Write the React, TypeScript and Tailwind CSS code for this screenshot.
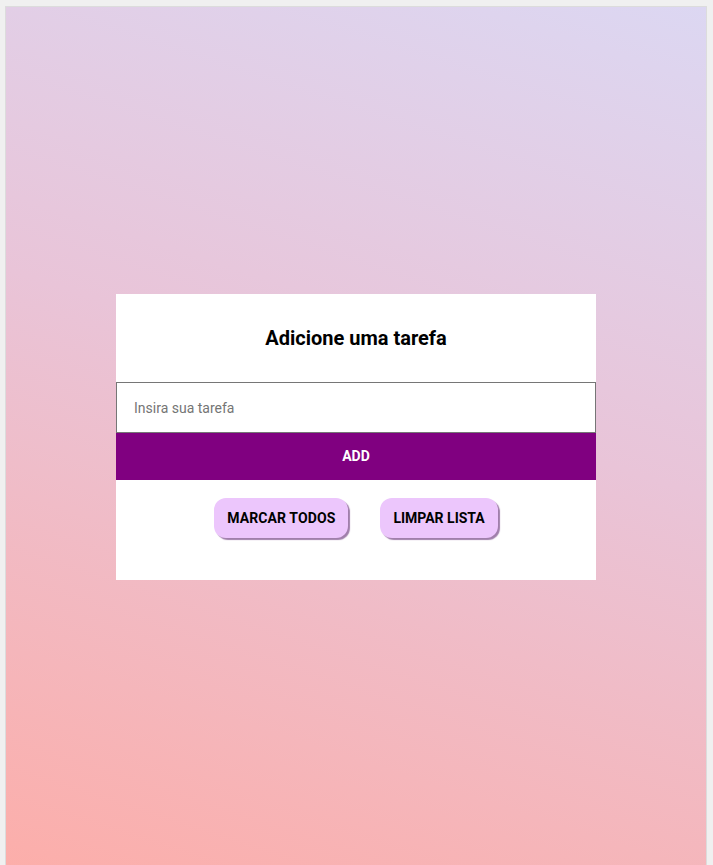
import React from "react";

export default function App() {
  return (
    <div className="bg-[#f0f0f0] pt-[6px] pl-[5px] pr-[6px] overflow-hidden h-[865px]" style={{ fontFamily: "Roboto, 'Liberation Sans', sans-serif" }}>
      <div className="border border-[#dcdcdc] h-[862px] flex items-center justify-center bg-[linear-gradient(18deg,#fcaeaa_0%,#e9c4d8_55%,#dcd7f2_100%)]">
        <div className="w-[480px] bg-white flex flex-col">
          <h1 className="text-[20px] leading-[24px] font-bold text-black text-center pt-[32px] pb-[32px]">
            Adicione uma tarefa
          </h1>
          <input
            type="text"
            placeholder="Insira sua tarefa"
            className="h-[51px] border border-[#767676] pl-[17px] text-[14px] text-black placeholder:text-[#757575] outline-none"
          />
          <button className="h-[47px] bg-[#800080] text-white font-bold text-[14px]">ADD</button>
          <div className="flex justify-center gap-[32px] pt-[18px] pb-[42px]">
            <button className="h-[40px] px-[13px] rounded-[12px] bg-[#ecc6fc] text-black font-bold text-[14px] tracking-[0.1px] shadow-[2px_2px_1px_#a07fab]">
              MARCAR TODOS
            </button>
            <button className="h-[40px] px-[13px] rounded-[12px] bg-[#ecc6fc] text-black font-bold text-[14px] shadow-[2px_2px_1px_#a07fab]">
              LIMPAR LISTA
            </button>
          </div>
        </div>
      </div>
    </div>
  );
}
